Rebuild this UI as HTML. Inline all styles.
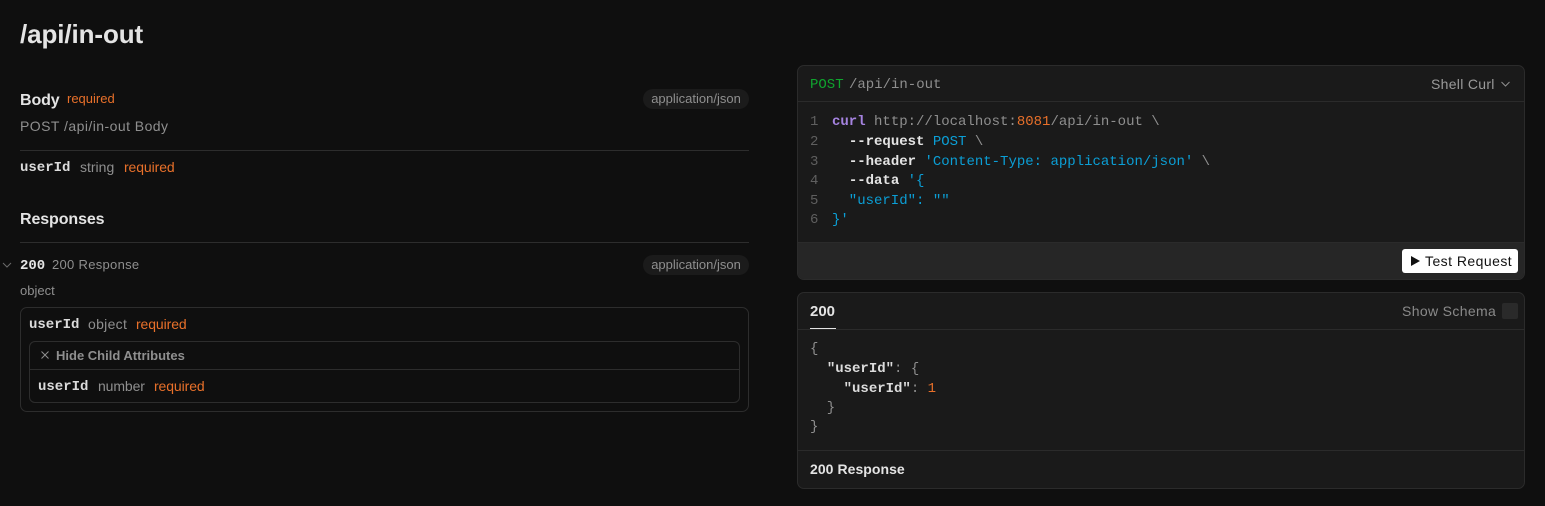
<!DOCTYPE html>
<html><head><meta charset="utf-8">
<style>
html,body{margin:0;padding:0;background:#0f0f0f;}
#p{position:relative;width:1545px;height:506px;overflow:hidden;background:#0f0f0f;font-family:"Liberation Sans",sans-serif;}
#p div,#p span.a{position:absolute;white-space:pre;box-sizing:border-box;}
.m{font-family:"Liberation Mono",monospace;font-size:14px;line-height:20px;height:20px;}
.g{color:#8f8f8f}.o{color:#e8702a}.w{color:#e4e4e4}.b{color:#0b9fd6}.n{color:#5f5f5f}
.pill{background:#1b1b1b;border-radius:10px;width:106px;height:20px;left:643px;color:#8f8f8f;font-size:13px;line-height:20px;text-align:center;}
.ln{background:#2d2d2d;height:1px;left:20px;width:729px}
.card{background:#1a1a1a;border:1px solid #2b2b2b;border-radius:7px;left:797px;width:728px;overflow:hidden}
.k{color:#dcdcdc;font-weight:bold}
</style></head><body><div id="p">
<div class="w" style="left:20px;top:18px;font-size:26px;line-height:32px;font-weight:bold;letter-spacing:-.1px">/api/in-out</div>

<div class="w" style="left:20px;top:91px;font-size:16px;line-height:20px;font-weight:bold;letter-spacing:-.1px">Body</div>
<div class="o" style="left:67px;top:89px;font-size:13px;line-height:20px">required</div>
<div class="pill" style="top:89px">application/json</div>
<div class="g" style="left:20px;top:116px;font-size:14px;line-height:20px;letter-spacing:.45px">POST /api/in-out Body</div>
<div class="ln" style="top:150px"></div>
<div class="m k" style="left:20px;top:158px">userId</div>
<div class="g" style="left:80px;top:157px;font-size:14px;line-height:20px">string</div>
<div class="o" style="left:124px;top:157px;font-size:14px;line-height:20px;letter-spacing:-.1px">required</div>

<div class="w" style="left:20px;top:210px;font-size:16px;line-height:20px;font-weight:bold;letter-spacing:-.1px">Responses</div>
<div class="ln" style="top:242px"></div>

<svg style="position:absolute;left:2px;top:260px" width="10" height="10" viewBox="0 0 10 10"><path d="M1 3l4 4 4-4" fill="none" stroke="#6a6a6a" stroke-width="1"/></svg>
<div class="m" style="left:20px;top:256px;color:#e4e4e4;font-weight:bold">200</div>
<div class="g" style="left:52px;top:255px;font-size:13px;line-height:20px;letter-spacing:.3px">200 Response</div>
<div class="pill" style="top:255px">application/json</div>
<div class="g" style="left:20px;top:281px;font-size:13px;line-height:20px">object</div>

<div style="left:20px;top:307px;width:729px;height:105px;border:1px solid #2d2d2d;border-radius:7px"></div>
<div class="m k" style="left:29px;top:315px">userId</div>
<div class="g" style="left:88px;top:314px;font-size:14px;line-height:20px;letter-spacing:.3px">object</div>
<div class="o" style="left:136px;top:314px;font-size:14px;line-height:20px;letter-spacing:-.1px">required</div>

<div style="left:29px;top:341px;width:711px;height:62px;border:1px solid #2d2d2d;border-radius:6px"></div>
<div style="left:30px;top:369px;width:709px;height:1px;background:#2d2d2d"></div>
<svg style="position:absolute;left:40px;top:350px" width="10" height="10" viewBox="0 0 10 10"><path d="M1.5 1.500l7 7M8.500 1.500l-7 7" fill="none" stroke="#8f8f8f" stroke-width="1"/></svg>
<div style="left:56px;top:346px;font-size:13px;line-height:20px;font-weight:bold;color:#8f8f8f">Hide Child Attributes</div>
<div class="m k" style="left:38px;top:377px">userId</div>
<div class="g" style="left:98px;top:376px;font-size:14px;line-height:20px;letter-spacing:-.1px">number</div>
<div class="o" style="left:154px;top:376px;font-size:14px;line-height:20px;letter-spacing:-.1px">required</div>

<div class="card" style="top:65px;height:215px">
  <div style="left:0;top:35px;width:726px;height:1px;background:#2b2b2b"></div>
  <div style="left:0;top:176px;width:726px;height:37px;background:#262626;border-top:1px solid #2b2b2b"></div>
</div>
<div class="m" style="left:810px;top:75px;color:#0fa52e">POST</div>
<div class="m g" style="left:849px;top:75px">/api/in-out</div>
<div style="left:1431px;top:74px;font-size:14px;line-height:20px;color:#9a9a9a;letter-spacing:.3px">Shell Curl</div>
<svg style="position:absolute;left:1500px;top:79px" width="11" height="10" viewBox="0 0 11 10"><path d="M1.500 3l4 4 4-4" fill="none" stroke="#8f8f8f" stroke-width="1"/></svg>

<div class="m n" style="left:810px;top:112px">1</div>
<div class="m n" style="left:810px;top:132px">2</div>
<div class="m n" style="left:810px;top:152px">3</div>
<div class="m n" style="left:810px;top:171px">4</div>
<div class="m n" style="left:810px;top:191px">5</div>
<div class="m n" style="left:810px;top:210px">6</div>
<div class="m g" style="left:832px;top:112px"><span style="color:#a583e0;font-weight:bold">curl</span> http://localhost:<span style="color:#e8702a">8081</span>/api/in-out \</div>
<div class="m g" style="left:832px;top:132px">  <span style="color:#e4e4e4;font-weight:bold">--request</span> <span class="b">POST</span> \</div>
<div class="m g" style="left:832px;top:152px">  <span style="color:#e4e4e4;font-weight:bold">--header</span> <span class="b">'Content-Type: application/json'</span> \</div>
<div class="m g" style="left:832px;top:171px">  <span style="color:#e4e4e4;font-weight:bold">--data</span> <span class="b">'{</span></div>
<div class="m b" style="left:832px;top:191px">  "userId": ""</div>
<div class="m b" style="left:832px;top:210px">}'</div>

<div style="left:1402px;top:249px;width:116px;height:24px;background:#fff;border-radius:3px"></div>
<svg style="position:absolute;left:1410px;top:255px" width="11" height="12" viewBox="0 0 11 12"><path d="M1 1l9 5-9 5z" fill="#111"/></svg>
<div style="left:1425px;top:251px;font-size:14px;line-height:20px;color:#111;letter-spacing:.45px">Test Request</div>

<div class="card" style="top:292px;height:197px">
  <div style="left:0;top:36px;width:726px;height:1px;background:#2b2b2b"></div>
  <div style="left:0;top:157px;width:726px;height:1px;background:#2b2b2b"></div>
</div>
<div class="w" style="left:810px;top:302px;font-size:15px;line-height:20px;font-weight:bold">200</div>
<div style="left:810px;top:328px;width:26px;height:1px;background:#e4e4e4"></div>
<div style="left:1402px;top:301px;font-size:14px;line-height:20px;color:#8a8a8a;letter-spacing:.35px">Show Schema</div>
<div style="left:1502px;top:303px;width:16px;height:16px;background:#2a2a2a;border-radius:2px"></div>

<div class="m g" style="left:810px;top:339px">{</div>
<div class="m g" style="left:810px;top:359px">  <span class="k">"userId"</span>: {</div>
<div class="m g" style="left:810px;top:379px">    <span class="k">"userId"</span>: <span class="o">1</span></div>
<div class="m g" style="left:810px;top:398px">  }</div>
<div class="m g" style="left:810px;top:417px">}</div>
<div class="w" style="left:810px;top:459px;font-size:14px;line-height:20px;font-weight:bold;letter-spacing:.05px">200 Response</div>
</div></body></html>
